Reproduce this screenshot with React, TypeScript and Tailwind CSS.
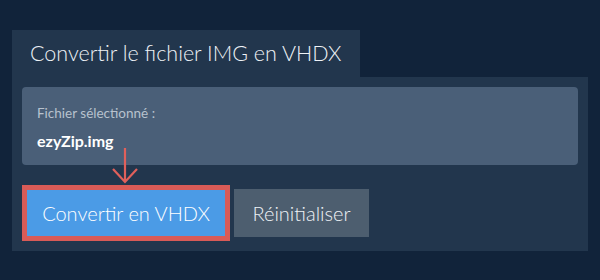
export default function App() {
  return (
    <div className="w-[600px] h-[280px] bg-[#11233a] pt-[30px] px-[12px] font-['Lato',sans-serif]">
      {/* Tab */}
      <div className="w-[348px] h-[47px] bg-[#22364d] pl-[18px] flex items-center">
        <span className="text-[21.5px] font-light text-[#eef2f6] leading-none">Convertir le fichier IMG en VHDX</span>
      </div>

      {/* Panel */}
      <div className="relative w-[576px] bg-[#22364d] p-[10px]">
        <div className="h-[78px] rounded-[4px] bg-[#4a5f78] pl-[15px] pt-[20px]">
          <div className="text-[13.5px] leading-none text-[#b8c2ce]">Fichier sélectionné :</div>
          <div className="mt-[12px] text-[16px] leading-none font-bold text-white">ezyZip.img</div>
        </div>

        <div className="mt-[20px] flex items-center">
          <div className="border-[5px] border-[#d95b57]">
            <button className="w-[198px] h-[46px] bg-[#4b9be6] text-white text-[20px] font-light">
              Convertir en VHDX
            </button>
          </div>
          <button className="ml-[4px] w-[135px] h-[48px] bg-[#4d5e6f] text-[#eef2f6] text-[20px] font-light">
            Réinitialiser
          </button>
        </div>

        {/* Arrow */}
        <svg className="absolute left-[100px] top-[70px]" width="26" height="37" viewBox="0 0 26 37">
          <path d="M13 1 V35 M1 22 L13 35 L25 22" fill="none" stroke="#e0605b" strokeWidth="2.2" />
        </svg>
      </div>
    </div>
  );
}
